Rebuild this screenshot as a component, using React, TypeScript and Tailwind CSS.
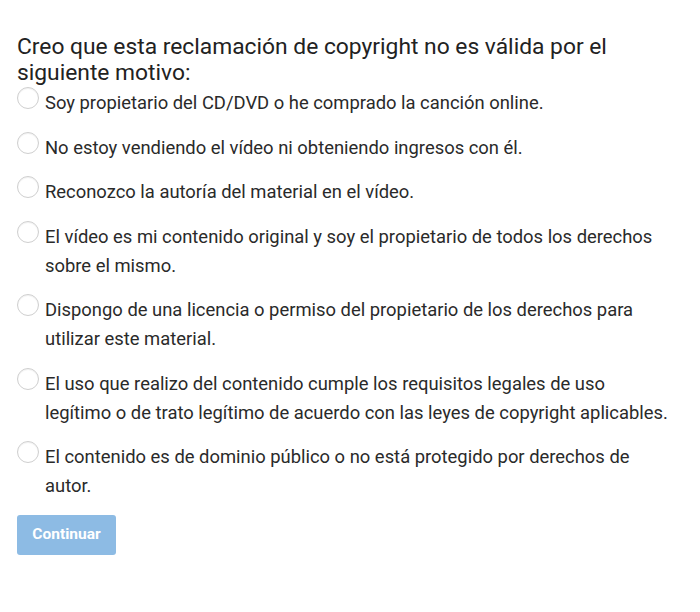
import React from "react";

const options: string[] = [
  "Soy propietario del CD/DVD o he comprado la canción online.",
  "No estoy vendiendo el vídeo ni obteniendo ingresos con él.",
  "Reconozco la autoría del material en el vídeo.",
  "El vídeo es mi contenido original y soy el propietario de todos los derechos sobre el mismo.",
  "Dispongo de una licencia o permiso del propietario de los derechos para utilizar este material.",
  "El uso que realizo del contenido cumple los requisitos legales de uso legítimo o de trato legítimo de acuerdo con las leyes de copyright aplicables.",
  "El contenido es de dominio público o no está protegido por derechos de autor.",
];

export default function App() {
  return (
    <div
      className="w-[700px] h-[612px] bg-white pl-[17px] pt-[34px]"
      style={{ fontFamily: "Roboto, 'Liberation Sans', sans-serif" }}
    >
      <h1 className="text-[22.8px] leading-[26px] text-[#222] font-normal w-[630px]">
        Creo que esta reclamación de copyright no es válida por el siguiente motivo:
      </h1>
      <div className="flex flex-col gap-[15.5px] mt-[2px]">
        {options.map((o) => (
          <label key={o} className="flex items-start gap-[6px]">
            <span className="mt-[-1px] w-[22px] h-[22px] shrink-0 rounded-full border border-[#cfcfcf] bg-white shadow-[inset_0_1px_1px_rgba(0,0,0,0.06)]" />
            <span className="text-[18.4px] leading-[29px] text-[#2a2a2a] w-[626px]">{o}</span>
          </label>
        ))}
      </div>
      <button className="mt-[15px] w-[99px] h-[40px] rounded-[3px] bg-[#8dbbe4] text-white font-bold text-[15.5px]">
        Continuar
      </button>
    </div>
  );
}
